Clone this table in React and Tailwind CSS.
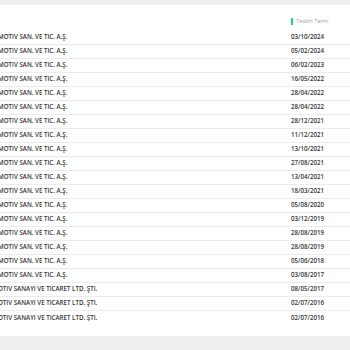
import React from "react";

const rows = [
  ["MOTİV SAN. VE TİC. A.Ş.", "03/10/2024"],
  ["MOTİV SAN. VE TİC. A.Ş.", "05/02/2024"],
  ["MOTİV SAN. VE TİC. A.Ş.", "06/02/2023"],
  ["MOTİV SAN. VE TİC. A.Ş.", "16/05/2022"],
  ["MOTİV SAN. VE TİC. A.Ş.", "28/04/2022"],
  ["MOTİV SAN. VE TİC. A.Ş.", "28/04/2022"],
  ["MOTİV SAN. VE TİC. A.Ş.", "28/12/2021"],
  ["MOTİV SAN. VE TİC. A.Ş.", "11/12/2021"],
  ["MOTİV SAN. VE TİC. A.Ş.", "13/10/2021"],
  ["MOTİV SAN. VE TİC. A.Ş.", "27/08/2021"],
  ["MOTİV SAN. VE TİC. A.Ş.", "13/04/2021"],
  ["MOTİV SAN. VE TİC. A.Ş.", "18/03/2021"],
  ["MOTİV SAN. VE TİC. A.Ş.", "05/08/2020"],
  ["MOTİV SAN. VE TİC. A.Ş.", "03/12/2019"],
  ["MOTİV SAN. VE TİC. A.Ş.", "28/08/2019"],
  ["MOTİV SAN. VE TİC. A.Ş.", "28/08/2019"],
  ["MOTİV SAN. VE TİC. A.Ş.", "05/06/2018"],
  ["MOTİV SAN. VE TİC. A.Ş.", "03/08/2017"],
  ["OTİV SANAYİ VE TİCARET LTD. ŞTİ.", "08/05/2017"],
  ["OTİV SANAYİ VE TİCARET LTD. ŞTİ.", "02/07/2016"],
  ["OTİV SANAYİ VE TİCARET LTD. ŞTİ.", "02/07/2016"],
];

export default function App() {
  return (
    <div className="h-[350px] w-[350px] overflow-hidden bg-[#efefef] pt-[5px] font-['Open_Sans',sans-serif]">
      <div className="h-[331px] bg-white">
        <div className="flex h-[26px] items-center pt-[7px] text-[5.4px] leading-none">
          <div className="w-[291px]" />
          <div className="flex items-center gap-[4px]">
            <span className="h-[7px] w-[1.5px] bg-[#2ec79a]" />
            <span className="text-[#9a9a9a]">Teslim Tarihi</span>
          </div>
        </div>
        <div className="text-[6.2px] font-semibold leading-none text-[#353535]">
          {rows.map(([name, date], i) => (
            <div key={i} className={`flex h-[14px] items-center ${i < rows.length - 1 ? "border-b border-[#ececec]" : ""}`}>
              <div className="w-[291px] overflow-hidden whitespace-nowrap">
                <span className="ml-[-2px] block">{name}</span>
              </div>
              <span>{date}</span>
            </div>
          ))}
        </div>
      </div>
    </div>
  );
}
